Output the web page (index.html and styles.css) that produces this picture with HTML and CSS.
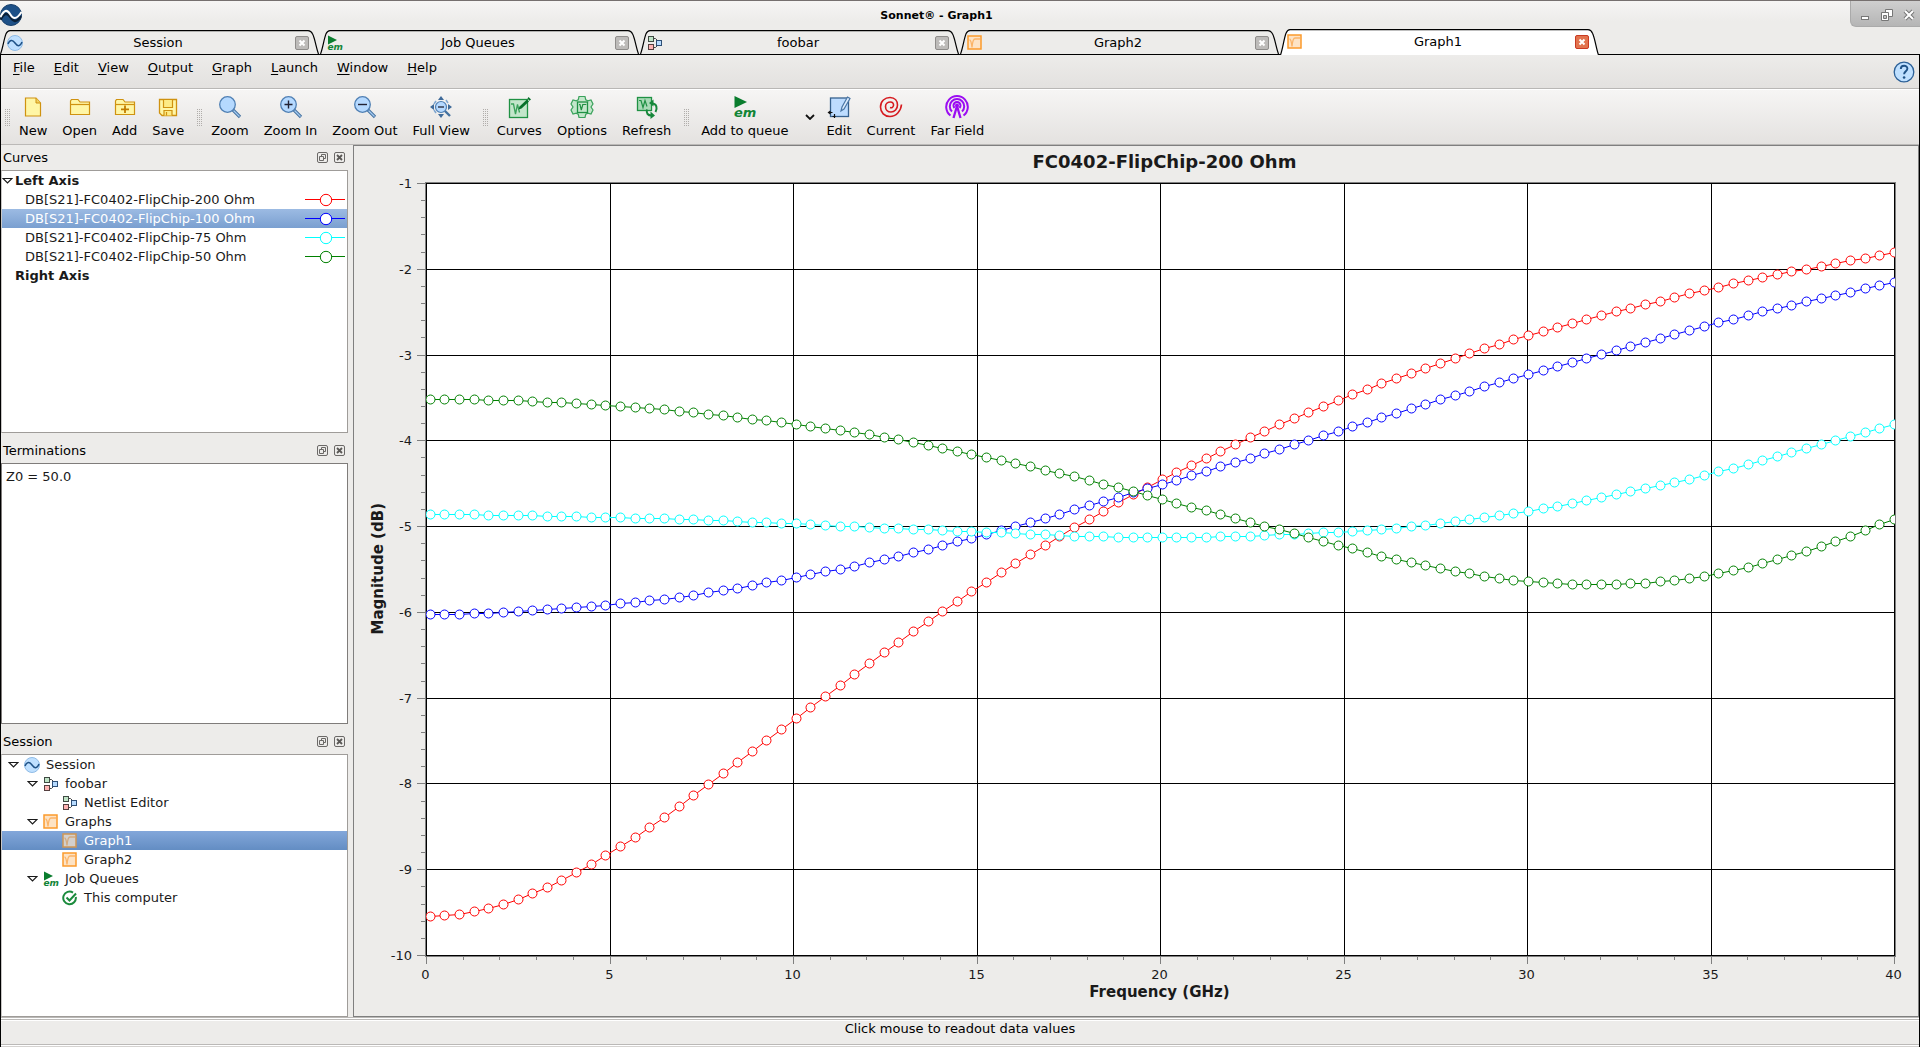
FILE: index.html
```html
<!DOCTYPE html>
<html lang="en">
<head>
<meta charset="utf-8">
<title>Sonnet® - Graph1</title>
<link rel="stylesheet" href="styles.css">
</head>
<body>
<svg class="sprite" aria-hidden="true">
  <symbol id="i-logo" viewBox="0 0 24 24">
    <circle cx="12" cy="12" r="10.5" fill="#1d5087" stroke="#173f6b"/>
    <path d="M1.5 14.5C5 8 8 7 11 11.5s6 7 11-.5" transform="translate(0 2.2)" fill="none" stroke="#0a2038" stroke-width="2.4"/>
    <path d="M1.5 14C5 7 8 6 11 11s6 6.500 11.500-2" fill="none" stroke="#fff" stroke-width="2"/>
  </symbol>
  <symbol id="i-wave" viewBox="0 0 16 16">
    <circle cx="8" cy="8" r="7.500" fill="#bfe0ff" stroke="#8fbbe6"/>
    <path d="M1 9C3 4.500 5.500 4.500 8 8s5 4 7-1" fill="none" stroke="#1f5287" stroke-width="1.500"/>
  </symbol>
  <symbol id="i-queue" viewBox="0 0 16 16">
    <path d="M1 0.500V9.500L10 5z" fill="#0a7d2e"/>
    <text x="0.500" y="14.500" class="em-text" font-size="9">em</text>
  </symbol>
  <symbol id="i-net" viewBox="0 0 16 16">
    <path d="M7 3.500h1.500l3 3M7 12.500h1.500l3-3" fill="none" stroke="#444"/>
    <rect x="1.500" y="1.500" width="5" height="5" fill="#bfe3c6" stroke="#3f4a42"/>
    <rect x="1.500" y="9.500" width="5" height="5" fill="#ffb3b3" stroke="#553f3f"/>
    <rect x="9.500" y="5.500" width="5" height="5" fill="#b7dbff" stroke="#2f4f75"/>
  </symbol>
  <symbol id="i-graph" viewBox="0 0 16 16">
    <rect x="1" y="1" width="13" height="13" fill="#fde3c5" stroke="#fb9a2b" stroke-width="1.500"/>
    <path d="M2.500 5C4 5 4.500 8 5 12.500 5.500 7 6 4 8 4h5" fill="none" stroke="#fbb468" stroke-width="1.300"/>
  </symbol>
  <symbol id="i-graph-sel" viewBox="0 0 16 16">
    <rect x="1" y="1" width="13" height="13" fill="#d3d0cd" stroke="#cf9654" stroke-width="1.500"/>
    <path d="M2.500 5C4 5 4.500 8 5 12.500 5.500 7 6 4 8 4h5" fill="none" stroke="#d3ab80" stroke-width="1.300"/>
  </symbol>
  <symbol id="i-check" viewBox="0 0 16 16">
    <path d="M13.800 7A6.300 6.300 0 1 1 11 2.600" fill="none" stroke="#1a8b3c" stroke-width="2"/>
    <path d="M4.500 7.500L7.500 10.500L14 3.500" fill="none" stroke="#1a8b3c" stroke-width="2"/>
  </symbol>
  <symbol id="i-x" viewBox="0 0 14 14">
    <rect x="0.500" y="0.500" width="13" height="13" rx="1.500" class="x-box"/>
    <path d="M4.500 4.500l5 5M9.500 4.500l-5 5" stroke="#fff" stroke-width="2"/>
  </symbol>
  <symbol id="i-float" viewBox="0 0 11 11">
    <rect x="0.500" y="0.500" width="10" height="10" rx="1.500" fill="none" stroke="#6b6967"/>
    <path d="M2.500 4.500h4v4h-4zM4.500 4.500v-2h4v4h-2" fill="none" stroke="#6b6967"/>
  </symbol>
  <symbol id="i-dockx" viewBox="0 0 11 11">
    <rect x="0.500" y="0.500" width="10" height="10" rx="1.500" fill="none" stroke="#6b6967"/>
    <path d="M3 3l5 5M8 3l-5 5" stroke="#5a5856" stroke-width="1.800"/>
  </symbol>
  <symbol id="i-new" viewBox="0 0 24 24">
    <path d="M4.500 3H15l4.500 5v13h-15z" fill="#fff6a6" stroke="#cf9210" stroke-width="1.200"/>
    <path d="M15 3v5h4.500" fill="#f0d060" stroke="#cf9210"/>
  </symbol>
  <symbol id="i-open" viewBox="0 0 24 24">
    <path d="M2.500 19.500V6L3.500 4.500H10L12 7h9.500v12.500z" fill="#fff6a6" stroke="#cf9210" stroke-width="1.200"/>
    <path d="M2.500 9.500H21" stroke="#cf9210" stroke-width="1.200"/>
  </symbol>
  <symbol id="i-add" viewBox="0 0 24 24">
    <use href="#i-open"/>
    <path d="M12 10.500v7.500M8 14.300h8" stroke="#c27c00" stroke-width="1.800"/>
  </symbol>
  <symbol id="i-save" viewBox="0 0 24 24">
    <path d="M3.500 4.500h17v16H6l-2.500-2.500z" fill="#fff6a6" stroke="#cf9210" stroke-width="1.300"/>
    <path d="M7.500 4.500h9v8h-9zM8 20.500v-5h8v5M10.500 17v3.500" fill="#fdeb85" stroke="#cf9210" stroke-width="1.200"/>
  </symbol>
  <symbol id="i-zoom" viewBox="0 0 24 24">
    <path d="M15 15l7 7" stroke="#44719f" stroke-width="3.200"/>
    <path d="M15.500 15.500l6 6" stroke="#a5cbf2" stroke-width="1.200"/>
    <circle cx="9.500" cy="9.500" r="7.800" fill="#b5d9ff" stroke="#4f7fb3" stroke-width="1.300"/>
  </symbol>
  <symbol id="i-zoomin" viewBox="0 0 24 24">
    <use href="#i-zoom"/>
    <path d="M9.500 5.500v8M5.500 9.500h8" stroke="#223" stroke-width="1.400"/>
  </symbol>
  <symbol id="i-zoomout" viewBox="0 0 24 24">
    <use href="#i-zoom"/>
    <path d="M5 9.500h9" stroke="#223" stroke-width="1.400"/>
  </symbol>
  <symbol id="i-full" viewBox="0 0 24 24">
    <path d="M12 1l3 4H9zM12 23l-3-4h6zM1 12l4-3v6zM23 12l-4 3V9z" fill="#3f6a99"/>
    <path d="M5 9l2-3M17 5l2 3M5 15l2 3" stroke="#7ea6d0" stroke-width="1.500"/>
    <path d="M15.500 15.500l5.500 5.500" stroke="#44719f" stroke-width="2.400"/>
    <circle cx="12" cy="12" r="5.500" fill="#b5d9ff" stroke="#4f7fb3" stroke-width="1.200"/>
    <path d="M9 12h6" stroke="#223" stroke-width="1.300"/>
  </symbol>
  <symbol id="i-curves" viewBox="0 0 24 24">
    <rect x="2.500" y="4.500" width="18" height="18" fill="#c3e6cb" stroke="#1f9143" stroke-width="1.300"/>
    <path d="M4 9h2.500l2 10L10.500 9.500l2 8" fill="none" stroke="#3aa25b" stroke-width="1.300"/>
    <path d="M11.500 14.500l1-3L20 4.500l2 2-7.500 7z" fill="#08702a"/>
    <path d="M20.500 3.500l1-1.500L24 4.500l-1.500 1.200z" fill="#08702a"/>
  </symbol>
  <symbol id="i-options" viewBox="0 0 24 24">
    <path d="M9 1.500h6l.8 3.300 2 1.100 3.200-1L23 9l-2 3 2 3-2 4.100-3.200-1-2 1.100-.8 3.300H9l-.8-3.300-2-1.100-3.200 1L1 15l2-3-2-3 2-4.100 3.200 1 2-1.100z" fill="#c3e6cb" stroke="#3aa25b" stroke-width="1.200"/>
    <rect x="7.500" y="7" width="10" height="10.500" fill="#c3e6cb" stroke="#1f9143" stroke-width="1.300"/>
    <path d="M9 9.500h1l1.300 5.500 1.500-5.500h3.500" fill="none" stroke="#1f9143" stroke-width="1.200"/>
  </symbol>
  <symbol id="i-refresh" viewBox="0 0 24 24">
    <rect x="2.500" y="2.500" width="14" height="13" fill="#a9dab6" stroke="#1f9143" stroke-width="1.300"/>
    <path d="M4 5.500h2l2 7 2-7 2 6" fill="none" stroke="#1f9143" stroke-width="1.200"/>
    <path d="M17 8.500c5 0 5.500 5 3.500 8.500M12 14.500c-1 4 1 6 4.500 6" fill="none" stroke="#15873a" stroke-width="2"/>
    <path d="M18.500 4.500v7L14 8zM15.500 16.500v7.500l4.500-3.500z" fill="#15873a"/>
  </symbol>
  <symbol id="i-queue-big" viewBox="0 0 24 24">
    <path d="M1.500 1V13L14 7z" fill="#0a7d2e"/>
    <text x="1" y="21.500" class="em-text" font-size="13">em</text>
  </symbol>
  <symbol id="i-edit" viewBox="0 0 24 24">
    <rect x="3.500" y="3" width="18" height="18.500" fill="#bddcff" stroke="#36618f" stroke-width="1.300"/>
    <path d="M14 16l1-4L20.500 2l2.500 1.500L17 14z" fill="#dcecfc" stroke="#4b76a5" stroke-width="1.200"/>
    <path d="M2 17.500h3.500M3.500 16l-2 1.500 2 1.500M7.500 19v4M5.500 21.500h3" fill="none" stroke="#111" stroke-width="1.200"/>
  </symbol>
  <symbol id="i-current" viewBox="0 0 24 24">
    <path d="M22.500 9.500C22 16 17 21.500 11 21.500 5.500 21.500 1.500 17.500 1.500 12 1.500 6 6 2.500 11 2.500c5 0 7.500 3.500 7.500 7.500 0 4-3 7-6.500 7s-5.500-2.500-5.500-5.500S9 7 11.500 7c2 0 3.300 1.500 3 3.500-.3 2-2 2.500-3.500 2" fill="none" stroke="#d61a1f" stroke-width="1.600"/>
  </symbol>
  <symbol id="i-far" viewBox="0 0 24 24">
    <g fill="none" stroke="#9b0df2" stroke-width="2">
      <path d="M5.500 20.500a10.800 10.800 0 1 1 13 0"/>
      <path d="M7 16.500a7.200 7.200 0 1 1 10 0"/>
      <path d="M9.500 13a3.500 3.500 0 1 1 5 0"/>
      <path d="M12 11L8.500 23M12 11l3.500 12" stroke-width="2.300"/>
    </g>
    <circle cx="12" cy="10.500" r="2" fill="#9b0df2"/>
  </symbol>
  <symbol id="i-help" viewBox="0 0 22 22">
    <circle cx="11" cy="11" r="9.800" fill="#bfe0ff" stroke="#2c6097" stroke-width="1.300"/>
    <path d="M7.800 8c0-4.300 6.600-4.300 6.600-.4 0 2.500-3.300 2.900-3.300 5.700" fill="none" stroke="#1f5287" stroke-width="1.900"/>
    <circle cx="11.100" cy="16.500" r="1.300" fill="#1f5287"/>
  </symbol>
  <symbol id="i-arrow" viewBox="0 0 11 8">
    <path d="M1 1.500h9L5.500 6z" fill="#fff" stroke="#1a1a1a" stroke-width="1.200"/>
  </symbol>
  <symbol id="i-swatch" viewBox="0 0 40 14">
    <path d="M0 6.500h40" stroke="currentColor"/>
    <circle cx="21" cy="7" r="5.700" fill="#fff" stroke="currentColor"/>
  </symbol>
  <symbol id="i-tab" viewBox="0 0 320 25" preserveAspectRatio="none">
    <path d="M0.500 25C3 18 4 9 6 4Q7.500.7 10 .7H308Q311 .7 312.500 4C315 9 316 18 318.500 25" class="tab-outline"/>
  </symbol>
</svg>

<header class="titlebar">
  <svg class="logo"><use href="#i-logo"/></svg>
  <h1>Sonnet® - Graph1</h1>
  <div class="winctl">
    <button aria-label="Minimize"><svg viewBox="0 0 14 14"><rect x="3.500" y="8.500" width="7" height="3" fill="#fff" stroke="#777"/></svg></button>
    <button aria-label="Restore"><svg viewBox="0 0 14 14"><path d="M5.500 1.500h7v7h-7z" fill="#fff" stroke="#777"/><path d="M1.500 4.500h7v8h-7z" fill="#fff" stroke="#777"/><path d="M3.500 7.500h3v3h-3z" fill="#c4c4c4" stroke="#777"/></svg></button>
    <button aria-label="Close"><svg viewBox="0 0 14 14"><path d="M3 3l8 8M11 3l-8 8" stroke="#777" stroke-width="4"/><path d="M3 3l8 8M11 3l-8 8" stroke="#fff" stroke-width="2"/></svg></button>
  </div>
</header>

<nav class="tabs" aria-label="Documents">
  <div class="tab"><svg class="tab-shape"><use href="#i-tab"/></svg><svg class="icon16"><use href="#i-wave"/></svg><button class="tab-name">Session</button><button class="tab-close" aria-label="Close Session"><svg><use href="#i-x"/></svg></button></div>
  <div class="tab"><svg class="tab-shape"><use href="#i-tab"/></svg><svg class="icon16"><use href="#i-queue"/></svg><button class="tab-name">Job Queues</button><button class="tab-close" aria-label="Close Job Queues"><svg><use href="#i-x"/></svg></button></div>
  <div class="tab"><svg class="tab-shape"><use href="#i-tab"/></svg><svg class="icon16"><use href="#i-net"/></svg><button class="tab-name">foobar</button><button class="tab-close" aria-label="Close foobar"><svg><use href="#i-x"/></svg></button></div>
  <div class="tab"><svg class="tab-shape"><use href="#i-tab"/></svg><svg class="icon16"><use href="#i-graph"/></svg><button class="tab-name">Graph2</button><button class="tab-close" aria-label="Close Graph2"><svg><use href="#i-x"/></svg></button></div>
  <div class="tab active"><svg class="tab-shape"><use href="#i-tab"/></svg><svg class="icon16"><use href="#i-graph"/></svg><button class="tab-name">Graph1</button><button class="tab-close" aria-label="Close Graph1"><svg><use href="#i-x"/></svg></button></div>
</nav>

<div class="window">
  <nav class="menubar" aria-label="Menu">
    <button><u>F</u>ile</button><button><u>E</u>dit</button><button><u>V</u>iew</button><button><u>O</u>utput</button><button><u>G</u>raph</button><button><u>L</u>aunch</button><button><u>W</u>indow</button><button><u>H</u>elp</button>
    <button class="help" aria-label="Help contents"><svg><use href="#i-help"/></svg></button>
  </nav>

  <div class="toolbar" role="toolbar">
    <div class="group">
      <button><svg><use href="#i-new"/></svg>New</button>
      <button><svg><use href="#i-open"/></svg>Open</button>
      <button><svg><use href="#i-add"/></svg>Add</button>
      <button><svg><use href="#i-save"/></svg>Save</button>
    </div>
    <div class="group">
      <button><svg><use href="#i-zoom"/></svg>Zoom</button>
      <button><svg><use href="#i-zoomin"/></svg>Zoom In</button>
      <button><svg><use href="#i-zoomout"/></svg>Zoom Out</button>
      <button><svg><use href="#i-full"/></svg>Full View</button>
    </div>
    <div class="group">
      <button><svg><use href="#i-curves"/></svg>Curves</button>
      <button><svg><use href="#i-options"/></svg>Options</button>
      <button><svg><use href="#i-refresh"/></svg>Refresh</button>
    </div>
    <div class="group">
      <button class="queue"><svg><use href="#i-queue-big"/></svg>Add to queue</button>
      <button class="drop" aria-label="Choose queue"><svg viewBox="0 0 10 6"><path d="M1 1l4 4 4-4" fill="none" stroke="#111" stroke-width="1.800"/></svg></button>
      <button><svg><use href="#i-edit"/></svg>Edit</button>
      <button><svg><use href="#i-current"/></svg>Current</button>
      <button><svg><use href="#i-far"/></svg>Far Field</button>
    </div>
  </div>

  <main class="work">
    <aside class="docks">
      <section class="dock">
        <header><h2>Curves</h2><button aria-label="Float Curves"><svg><use href="#i-float"/></svg></button><button aria-label="Close Curves"><svg><use href="#i-dockx"/></svg></button></header>
        <ul class="box curves">
          <li class="axis"><svg class="arrow"><use href="#i-arrow"/></svg>Left Axis</li>
          <li class="curve"><span>DB[S21]-FC0402-FlipChip-200 Ohm</span><svg class="swatch red"><use href="#i-swatch"/></svg></li>
          <li class="curve selected"><span>DB[S21]-FC0402-FlipChip-100 Ohm</span><svg class="swatch blue"><use href="#i-swatch"/></svg></li>
          <li class="curve"><span>DB[S21]-FC0402-FlipChip-75 Ohm</span><svg class="swatch cyan"><use href="#i-swatch"/></svg></li>
          <li class="curve"><span>DB[S21]-FC0402-FlipChip-50 Ohm</span><svg class="swatch green"><use href="#i-swatch"/></svg></li>
          <li class="axis closed">Right Axis</li>
        </ul>
      </section>
      <section class="dock">
        <header><h2><label for="term">Terminations</label></h2><button aria-label="Float Terminations"><svg><use href="#i-float"/></svg></button><button aria-label="Close Terminations"><svg><use href="#i-dockx"/></svg></button></header>
        <textarea id="term" class="box dark" readonly>Z0 = 50.0</textarea>
      </section>
      <section class="dock">
        <header><h2>Session</h2><button aria-label="Float Session"><svg><use href="#i-float"/></svg></button><button aria-label="Close Session panel"><svg><use href="#i-dockx"/></svg></button></header>
        <ul class="box tree">
          <li><svg class="arrow"><use href="#i-arrow"/></svg><svg class="icon16"><use href="#i-wave"/></svg>Session</li>
          <li class="l1"><svg class="arrow"><use href="#i-arrow"/></svg><svg class="icon16"><use href="#i-net"/></svg>foobar</li>
          <li class="l2"><svg class="icon16"><use href="#i-net"/></svg>Netlist Editor</li>
          <li class="l1"><svg class="arrow"><use href="#i-arrow"/></svg><svg class="icon16"><use href="#i-graph"/></svg>Graphs</li>
          <li class="l2 selected strong"><svg class="icon16"><use href="#i-graph-sel"/></svg>Graph1</li>
          <li class="l2"><svg class="icon16"><use href="#i-graph"/></svg>Graph2</li>
          <li class="l1"><svg class="arrow"><use href="#i-arrow"/></svg><svg class="icon16"><use href="#i-queue"/></svg>Job Queues</li>
          <li class="l2"><svg class="icon16"><use href="#i-check"/></svg>This computer</li>
        </ul>
      </section>
    </aside>

    <figure class="chart">
      <figcaption>FC0402-FlipChip-200 Ohm</figcaption>
      <div class="y-title"><span>Magnitude (dB)</span></div>
      <div class="plot"><svg id="plot" role="img" aria-label="Magnitude against frequency"></svg></div>
      <div class="x-title">Frequency (GHz)</div>
    </figure>
  </main>

  <footer class="status">Click mouse to readout data values</footer>
</div>
<script src="plot.js"></script>
</body>
</html>
```
FILE: styles.css
```css
* { box-sizing: border-box; }
body {
  margin: 0;
  min-height: 100vh;
  display: flex;
  flex-direction: column;
  background: #edecea;
  color: #000;
  font: 13px/16px "DejaVu Sans", sans-serif;
}
button {
  border: 0;
  padding: 0;
  background: none;
  color: inherit;
  font: inherit;
}
svg { display: block; flex: none; }
h1, h2, ul, figure { margin: 0; padding: 0; }
ul { list-style: none; }
.sprite { display: none; }
.em-text { font-family: "DejaVu Sans", sans-serif; font-weight: bold; font-style: italic; fill: #128537; }

.titlebar {
  display: flex;
  align-items: flex-start;
  height: 29px;
  border-top: 1px solid #76706f;
  background: linear-gradient(#f6f5f4, #edecea 20px);
}
.logo { width: 24px; height: 24px; margin: 2px 0 0 -1px; }
.titlebar h1 { flex: 1; text-align: center; font-size: 11px; line-height: 30px; }
.winctl {
  display: flex;
  align-items: center;
  gap: 8px;
  width: 70px;
  height: 26px;
  padding: 2px 5px 0 7px;
  border: solid #aaa;
  border-width: 0 0 1px 1px;
  border-bottom-left-radius: 6px;
  background: linear-gradient(#cfcfcf, #b5b5b5);
}
.winctl svg { width: 14px; height: 14px; }

.tabs {
  display: flex;
  height: 26px;
  border-bottom: 1px solid #000;
}
.tab {
  --tab-fill: #edecea;
  --x-fill: #bdbbb9;
  --x-line: #8f8d8b;
  position: relative;
  display: flex;
  align-items: center;
  flex: 0 1 320px;
  height: 25px;
  padding: 2px 11px 0 7px;
}
.tab.active {
  --tab-fill: #fff;
  --x-fill: #e2734e;
  --x-line: #c93a22;
  height: 26px;
  padding-top: 0;
}
.tab-shape { position: absolute; left: 0; top: 1px; width: 100%; height: 24px; }
.active .tab-shape { top: 0; height: 26px; }
.tab-outline { fill: var(--tab-fill); stroke: #000; stroke-width: 1.2; }
.icon16 { position: relative; width: 16px; height: 16px; }
.tab-name { position: relative; flex: 1; padding-right: 2px; line-height: 24px; }
.tab-close { position: relative; }
.tab-close svg { width: 14px; height: 14px; }
.x-box { fill: var(--x-fill); stroke: var(--x-line); }

.window {
  flex: 1;
  display: flex;
  flex-direction: column;
  border: solid #000;
  border-width: 0 1px;
}
.menubar {
  display: flex;
  gap: 1px;
  height: 34px;
  padding: 0 4px 0 3px;
  border-bottom: 1px solid #b9b7b5;
  background: linear-gradient(#edecea, #e3e1df);
}
.menubar button { height: 26px; padding: 0 9px; }
.menubar u { text-underline-offset: 2px; }
.menubar .help { margin-left: auto; height: 34px; padding: 0; }
.help svg { width: 22px; height: 22px; }

.toolbar {
  display: flex;
  height: 56px;
  border-top: 1px solid #fff;
  border-bottom: 1px solid #bbb9b7;
  background: linear-gradient(#f6f5f4, #e4e2e0);
}
.group { display: flex; gap: 15px; padding: 0 13px 0 4px; }
.group + .group { padding-left: 0; }
.group::before {
  content: "";
  width: 5px;
  height: 17px;
  margin: 19px -6px 0 0;
  background: conic-gradient(from 270deg at 1px 1px, #b0adaa 90deg, transparent 0) 0 0 / 2px 2px;
}
.group button {
  display: flex;
  flex-direction: column;
  align-items: center;
  gap: 4px;
  padding-top: 5px;
}
.group svg { width: 24px; height: 24px; }
.group .queue { padding-left: 3px; }
.group .drop { padding: 24px 0 0 2px; margin-right: -4px; }
.group .drop svg { width: 10px; height: 6px; }

.work {
  flex: 1;
  display: grid;
  grid-template-columns: 347px 1fr;
  column-gap: 5px;
}
.docks { display: grid; grid-template-rows: 288fr 286fr 288fr; row-gap: 5px; }
.dock { display: flex; flex-direction: column; min-height: 0; }
.dock header {
  display: flex;
  align-items: center;
  gap: 6px;
  height: 25px;
  padding: 0 3px 0 2px;
}
.dock h2 { flex: 1; font-size: 13px; font-weight: normal; }
.dock header svg { width: 11px; height: 11px; }
.box {
  flex: 1;
  min-height: 0;
  border: 1px solid #9f9c99;
  border-left-color: #c9c7c5;
  background: #fff;
  color: #1a1a1a;
}
.box li { display: flex; align-items: center; height: 19px; }
.arrow { width: 11px; height: 8px; }
.axis { gap: 2px; font-weight: bold; }
.axis.closed { padding-left: 13px; }
.curve { padding: 0 2px 0 23px; }
.curve span { flex: 1; }
.swatch { width: 40px; height: 14px; }
.red { color: #f00; }
.blue { color: #00f; }
.cyan { color: #0ff; }
.green { color: #008000; }
.selected { color: #fff; background: linear-gradient(#9cbbe3, #7a9fd0); }
.selected.strong { background: linear-gradient(#83a7da, #638dc3); }
.tree li { gap: 6px; padding-left: 6px; }
.tree .l1 { padding-left: 25px; }
.tree .l2 { padding-left: 60px; }
.tree .arrow { margin-right: -1px; }
textarea.box {
  display: block;
  width: 100%;
  margin: 0;
  padding: 5px 4px;
  resize: none;
  outline: 0;
  font: inherit;
}
.box.dark { border-color: #7f7c7a; }

.chart {
  display: grid;
  grid-template: 32px 1fr 34px / 36px 1fr;
  border: 1px solid #7f7f7f;
  color: #1a1a1a;
  font-weight: bold;
  min-width: 0;
}
.chart figcaption {
  grid-column: 2;
  padding: 0 15px 0 36px;
  text-align: center;
  font-size: 18px;
  line-height: 32px;
}
.y-title {
  grid-column: 1;
  display: flex;
  align-items: center;
  justify-content: flex-end;
  padding: 5px 2px 27px 0;
  font-size: 15px;
  line-height: 20px;
}
.y-title span { writing-mode: vertical-rl; transform: rotate(180deg); }
.plot { position: relative; }
.plot svg { position: absolute; width: 100%; height: 100%; }
.plot text { font: 13px "DejaVu Sans", sans-serif; fill: #1a1a1a; }
.x-title {
  grid-column: 2;
  padding: 0 25px 0 36px;
  text-align: center;
  font-size: 15px;
  line-height: 20px;
}
.tick, .grid, .frame { shape-rendering: crispEdges; }
.tick { stroke: #7f7f7f; }
.grid { stroke: #000; }
.frame { fill: #fff; stroke: #7f7f7f; }
.trace { fill: none; stroke: currentColor; }
.marker { fill: #fff; stroke: currentColor; }

.status {
  height: 30px;
  border-top: 1px solid #bbb9b7;
  border-bottom: 1px solid #d5d3d1;
  box-shadow: inset 0 1px #fff, inset 0 2px #bbb9b7, inset 0 3px #fff, inset 0 -1px #fff, inset 0 -2px #bbb9b7;
  text-align: center;
  line-height: 21px;
}
```
FILE: plot.js
```js
// Each trace holds |S21| in dB at every fifth sample of the sweep.
const traces = [
  { name: "red", db: [-9.545, -9.405, -9.032, -8.508, -7.878, -7.237, -6.596, -5.99, -5.43, -4.917, -4.451, -4.043, -3.67, -3.332, -3.04, -2.772, -2.539, -2.329, -2.131, -1.968, -1.804] },
  { name: "blue", db: [-6.024, -6.001, -5.943, -5.867, -5.745, -5.593, -5.424, -5.22, -4.999, -4.754, -4.509, -4.253, -3.996, -3.728, -3.471, -3.227, -2.993, -2.76, -2.539, -2.341, -2.154] },
  { name: "cyan", db: [-4.859, -4.87, -4.886, -4.905, -4.934, -4.969, -5.01, -5.045, -5.08, -5.115, -5.127, -5.115, -5.08, -5.034, -4.94, -4.824, -4.661, -4.486, -4.276, -4.043, -3.81] },
  { name: "green", db: [-3.518, -3.53, -3.568, -3.626, -3.707, -3.81, -3.926, -4.089, -4.264, -4.462, -4.684, -4.905, -5.127, -5.343, -5.523, -5.64, -5.675, -5.628, -5.477, -5.232, -4.917] }
];
const margin = { left: 36, right: 23, top: 5, bottom: 27 };
const svg = document.getElementById("plot");

// Cubic interpolation between the stored samples.
function sample(v, i) {
  const k = Math.min(Math.floor(i / 5), v.length - 2);
  const t = i / 5 - k;
  const b = v[k], c = v[k + 1];
  const a = k ? v[k - 1] : c;
  const d = k + 2 < v.length ? v[k + 2] : 2 * c - b;
  return b + 0.5 * t * (c - a + t * (2 * a - 5 * b + 4 * c - d + t * (3 * (b - c) + d - a)));
}

function draw() {
  const box = svg.parentElement.getBoundingClientRect();
  const x0 = margin.left, x1 = Math.round(box.width) - margin.right - 1;
  const y0 = margin.top, y1 = Math.round(box.height) - margin.bottom;
  const X = f => Math.round(x0 + (x1 - x0) * f / 40) + 0.5;
  const Y = db => Math.round(y0 + (y1 - y0) * (-1 - db) / 9) + 0.5;
  const line = (cls, a, b, c, d) => `<line class="${cls}" x1="${a}" y1="${b}" x2="${c}" y2="${d}"/>`;
  let out = `<clipPath id="area"><rect x="${x0}" y="${y0}" width="${x1 - x0 + 1}" height="${y1 - y0 + 1}"/></clipPath>`;
  out += `<rect class="frame" x="${x0 - 0.5}" y="${y0 - 0.5}" width="${x1 - x0 + 2}" height="${y1 - y0 + 2}"/>`;
  for (let f = 0; f <= 40; f++) {
    const major = f % 5 === 0;
    out += line("tick", X(f), y1 + 1, X(f), y1 + (major ? 9 : 5));
    if (major) {
      out += line("grid", X(f), y0, X(f), y1 + 1);
      out += `<text x="${X(f) - 1}" y="${y1 + 24}" text-anchor="middle">${f}</text>`;
    }
  }
  for (let n = 0; n <= 45; n++) {
    const y = Y(-1 - n / 5);
    const major = n % 5 === 0;
    out += line("tick", x0 - (major ? 9 : 5), y, x0, y);
    if (major) {
      out += line("grid", x0, y, x1 + 1, y);
      out += `<text x="${x0 - 14}" y="${y + 4.5}" text-anchor="end">${-1 - n / 5}</text>`;
    }
  }
  out += `<g clip-path="url(#area)">`;
  for (const t of traces) {
    const pts = [];
    for (let i = 0; i <= 100; i++) pts.push([X(0.1 + 0.399 * i), Y(sample(t.db, i))]);
    out += `<g class="${t.name}"><polyline class="trace" points="${pts.join(" ")}"/>`;
    out += pts.map(p => `<circle class="marker" cx="${p[0]}" cy="${p[1]}" r="4.5"/>`).join("") + "</g>";
  }
  svg.innerHTML = out + "</g>";
}
draw();
addEventListener("resize", draw);
```
